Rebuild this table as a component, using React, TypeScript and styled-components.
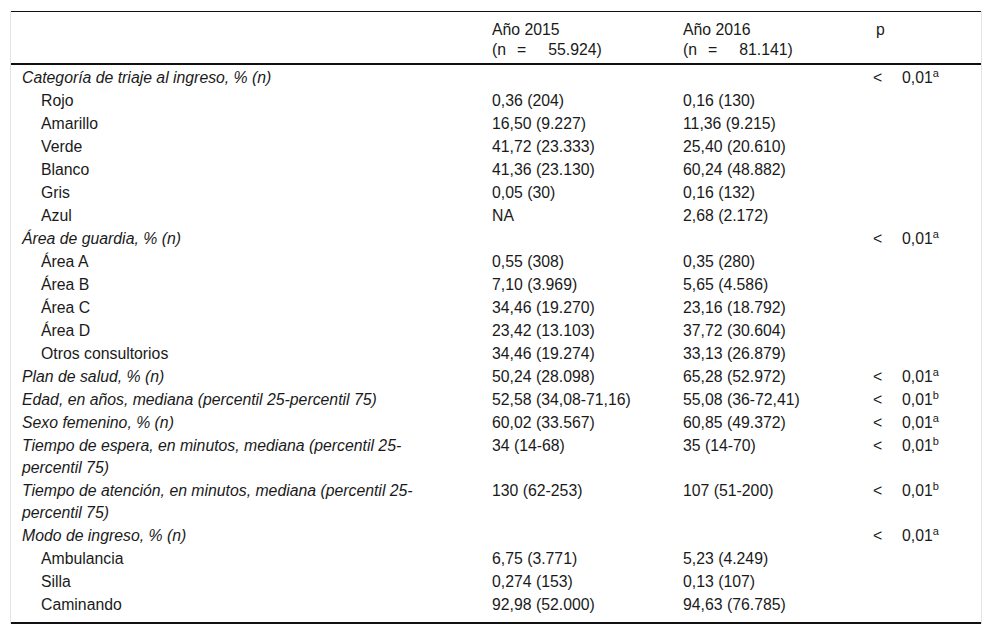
import React from "react";
import styled, { createGlobalStyle } from "styled-components";

const GlobalStyle = createGlobalStyle`
  html, body {
    margin: 0;
    padding: 0;
    background: #fff;
  }
  body {
    font-family: "Liberation Sans", Arial, Helvetica, sans-serif;
    color: #1a1a1a;
  }
`;

type Row = {
  label: string;
  group?: boolean;
  y15?: string;
  y16?: string;
  p?: "a" | "b";
};

const rows: Row[] = [
  { label: "Categoría de triaje al ingreso, % (n)", group: true, p: "a" },
  { label: "Rojo", y15: "0,36 (204)", y16: "0,16 (130)" },
  { label: "Amarillo", y15: "16,50 (9.227)", y16: "11,36 (9.215)" },
  { label: "Verde", y15: "41,72 (23.333)", y16: "25,40 (20.610)" },
  { label: "Blanco", y15: "41,36 (23.130)", y16: "60,24 (48.882)" },
  { label: "Gris", y15: "0,05 (30)", y16: "0,16 (132)" },
  { label: "Azul", y15: "NA", y16: "2,68 (2.172)" },
  { label: "Área de guardia, % (n)", group: true, p: "a" },
  { label: "Área A", y15: "0,55 (308)", y16: "0,35 (280)" },
  { label: "Área B", y15: "7,10 (3.969)", y16: "5,65 (4.586)" },
  { label: "Área C", y15: "34,46 (19.270)", y16: "23,16 (18.792)" },
  { label: "Área D", y15: "23,42 (13.103)", y16: "37,72 (30.604)" },
  { label: "Otros consultorios", y15: "34,46 (19.274)", y16: "33,13 (26.879)" },
  { label: "Plan de salud, % (n)", group: true, y15: "50,24 (28.098)", y16: "65,28 (52.972)", p: "a" },
  { label: "Edad, en años, mediana (percentil 25-percentil 75)", group: true, y15: "52,58 (34,08-71,16)", y16: "55,08 (36-72,41)", p: "b" },
  { label: "Sexo femenino, % (n)", group: true, y15: "60,02 (33.567)", y16: "60,85 (49.372)", p: "a" },
  { label: "Tiempo de espera, en minutos, mediana (percentil 25-percentil 75)", group: true, y15: "34 (14-68)", y16: "35 (14-70)", p: "b" },
  { label: "Tiempo de atención, en minutos, mediana (percentil 25-percentil 75)", group: true, y15: "130 (62-253)", y16: "107 (51-200)", p: "b" },
  { label: "Modo de ingreso, % (n)", group: true, p: "a" },
  { label: "Ambulancia", y15: "6,75 (3.771)", y16: "5,23 (4.249)" },
  { label: "Silla", y15: "0,274 (153)", y16: "0,13 (107)" },
  { label: "Caminando", y15: "92,98 (52.000)", y16: "94,63 (76.785)" },
];

// contenedor con bordes laterales grises
const Frame = styled.div`
  margin: 11px 10px 0;
  border-left: 1px solid #e4e4e4;
  border-right: 1px solid #e4e4e4;
`;

const Table = styled.table`
  width: 100%;
  table-layout: fixed;
  border-collapse: separate;
  border-spacing: 0;
  border-top: 1px solid #111;
  border-bottom: 2px solid #111;
  font-size: 15.8px;
`;

const HeadCell = styled.th`
  padding: 8px 8px 3px 11px;
  border-bottom: 2px solid #111;
  text-align: left;
  vertical-align: top;
  font-weight: normal;
  line-height: 20px;
  white-space: nowrap;
`;

const Cell = styled.td<{ $first?: boolean; $last?: boolean }>`
  padding: ${(p) => (p.$first ? "2px" : "1px")} 8px ${(p) => (p.$last ? "6px" : "0")} 11px;
  vertical-align: top;
  line-height: 22px;
  white-space: nowrap;
`;

const LabelCell = styled(Cell)<{ $group?: boolean }>`
  padding-left: ${(p) => (p.$group ? "11px" : "30px")};
  padding-right: 40px;
  font-style: ${(p) => (p.$group ? "italic" : "normal")};
  white-space: normal;
`;

const Eq = styled.span<{ $after?: boolean }>`
  margin-left: ${(p) => (p.$after ? "22px" : "11px")};
`;

const Lt = styled.span`
  display: inline-block;
  width: 29px;
  margin-left: -3px;
`;

const Sup = styled.sup`
  font-size: 11px;
  line-height: 0;
  vertical-align: 6px;
`;

function Count({ value }: { value: string }) {
  return (
    <>
      (n<Eq>=</Eq>
      <Eq $after>{value})</Eq>
    </>
  );
}

function PValue({ mark }: { mark: "a" | "b" }) {
  return (
    <>
      <Lt>&lt;</Lt>0,01<Sup>{mark}</Sup>
    </>
  );
}

export default function App() {
  return (
    <>
      <GlobalStyle />
      <Frame>
        <Table>
          <colgroup>
            <col style={{ width: 470 }} />
            <col style={{ width: 191 }} />
            <col style={{ width: 193 }} />
            <col style={{ width: 116 }} />
          </colgroup>
          <thead>
            <tr>
              <HeadCell />
              <HeadCell>
                Año 2015
                <br />
                <Count value="55.924" />
              </HeadCell>
              <HeadCell>
                Año 2016
                <br />
                <Count value="81.141" />
              </HeadCell>
              <HeadCell>p</HeadCell>
            </tr>
          </thead>
          <tbody>
            {rows.map((r, i) => {
              const first = i === 0;
              const last = i === rows.length - 1;
              return (
                <tr key={r.label}>
                  <LabelCell $group={r.group} $first={first} $last={last}>
                    {r.label}
                  </LabelCell>
                  <Cell $first={first} $last={last}>{r.y15}</Cell>
                  <Cell $first={first} $last={last}>{r.y16}</Cell>
                  <Cell $first={first} $last={last}>
                    {r.p && <PValue mark={r.p} />}
                  </Cell>
                </tr>
              );
            })}
          </tbody>
        </Table>
      </Frame>
    </>
  );
}
